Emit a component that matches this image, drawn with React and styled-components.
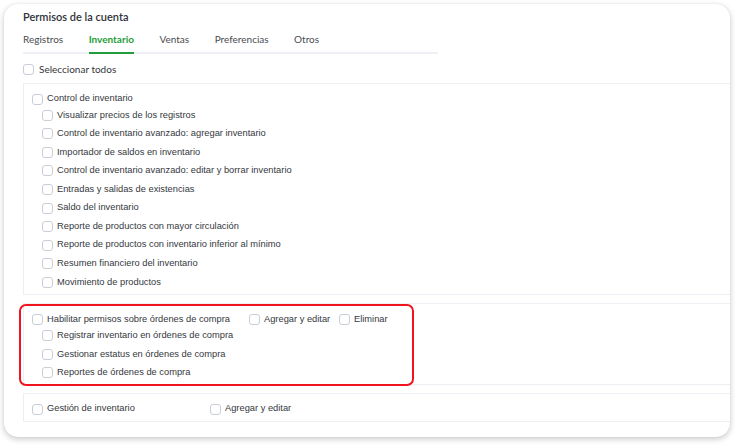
import React from "react";
import styled, { createGlobalStyle } from "styled-components";

const GlobalStyle = createGlobalStyle`
  html, body { margin: 0; padding: 0; background: #ffffff; }
  * { box-sizing: border-box; }
`;

const Page = styled.div`
  padding: 4px 5px 8px 4px;
`;

const Card = styled.section`
  width: 726px;
  background: #ffffff;
  border-radius: 14px;
  box-shadow: 0 2px 6px rgba(0, 0, 0, 0.22), 0 0 1px rgba(0, 0, 0, 0.12);
  overflow: hidden;
  padding: 6px 0 15px 19px;
`;

const Title = styled.h2`
  margin: 0;
  font: 600 11px/14px Lato, "Noto Sans", sans-serif;
  color: #2f3237;
`;

const TabBar = styled.nav`
  display: flex;
  gap: 25.5px;
  width: 415px;
  margin-top: 8px;
  border-bottom: 2px solid #eff0f5;
`;

const Tab = styled.button`
  appearance: none;
  border: 0;
  background: none;
  padding: 0 0 6px;
  margin-bottom: -2px;
  border-bottom: 2px solid ${(p) => (p.$active ? "#1f9d3a" : "transparent")};
  font: ${(p) => (p.$active ? 700 : 400)} 10px/14px Lato, "Noto Sans", sans-serif;
  color: ${(p) => (p.$active ? "#1f9d3a" : "#4a4d52")};
  cursor: pointer;
`;

const SelectAll = styled.label`
  display: flex;
  align-items: center;
  gap: 5px;
  height: 14px;
  margin-top: 8px;
  font: 400 10px/14px Lato, "Noto Sans", sans-serif;
  color: #33363a;
`;

const Panel = styled.div`
  position: relative;
  width: 720px;
  margin-top: ${(p) => p.$gap}px;
  border: 1px solid #eceef4;
  border-top-color: #eef0f6;
  padding: 8px 0 ${(p) => p.$bottom}px 8px;
`;

const Row = styled.label`
  display: flex;
  align-items: center;
  gap: 4px;
  height: ${(p) => (p.$sub ? "18.55px" : "14px")};
  padding-left: ${(p) => (p.$sub ? "10px" : "0")};
  font: 400 9.3px/1 "Liberation Sans", Arial, sans-serif;
  color: #35383d;
  white-space: nowrap;
`;

const OptionRow = styled.div`
  display: flex;
  align-items: center;
  height: 14px;
  font: 400 9.3px/1 "Liberation Sans", Arial, sans-serif;
  color: #35383d;
  white-space: nowrap;
`;

const Cell = styled.label`
  display: flex;
  align-items: center;
  gap: 4px;
  width: ${(p) => p.$w}px;
  flex: none;
`;

const Box = styled.span`
  width: 11px;
  height: 11px;
  flex: none;
  border: 1px solid #c8cdd8;
  border-radius: 3px;
  background: #ffffff;
`;

const Highlight = styled.div`
  position: absolute;
  top: 0;
  left: -5px;
  width: 395px;
  height: 82px;
  border: 2px solid #f0141e;
  border-radius: 7px;
  pointer-events: none;
`;

const tabs = ["Registros", "Inventario", "Ventas", "Preferencias", "Otros"];

const inventory = [
  "Visualizar precios de los registros",
  "Control de inventario avanzado: agregar inventario",
  "Importador de saldos en inventario",
  "Control de inventario avanzado: editar y borrar inventario",
  "Entradas y salidas de existencias",
  "Saldo del inventario",
  "Reporte de productos con mayor circulación",
  "Reporte de productos con inventario inferior al mínimo",
  "Resumen financiero del inventario",
  "Movimiento de productos",
];

const orders = [
  "Registrar inventario en órdenes de compra",
  "Gestionar estatus en órdenes de compra",
  "Reportes de órdenes de compra",
];

export default function App() {
  return (
    <Page>
      <GlobalStyle />
      <Card>
        <Title>Permisos de la cuenta</Title>
        <TabBar>
          {tabs.map((t) => (
            <Tab key={t} $active={t === "Inventario"}>
              {t}
            </Tab>
          ))}
        </TabBar>
        <SelectAll>
          <Box />
          Seleccionar todos
        </SelectAll>

        <Panel $gap={7} $bottom={3}>
          <Row>
            <Box />
            Control de inventario
          </Row>
          {inventory.map((t) => (
            <Row key={t} $sub>
              <Box />
              {t}
            </Row>
          ))}
        </Panel>

        <Panel $gap={8} $bottom={2}>
          <OptionRow>
            <Cell $w={217}>
              <Box />
              Habilitar permisos sobre órdenes de compra
            </Cell>
            <Cell $w={90}>
              <Box />
              Agregar y editar
            </Cell>
            <Cell $w={60}>
              <Box />
              Eliminar
            </Cell>
          </OptionRow>
          {orders.map((t) => (
            <Row key={t} $sub>
              <Box />
              {t}
            </Row>
          ))}
          <Highlight />
        </Panel>

        <Panel $gap={8} $bottom={5}>
          <OptionRow>
            <Cell $w={178}>
              <Box />
              Gestión de inventario
            </Cell>
            <Cell $w={120}>
              <Box />
              Agregar y editar
            </Cell>
          </OptionRow>
        </Panel>
      </Card>
    </Page>
  );
}
